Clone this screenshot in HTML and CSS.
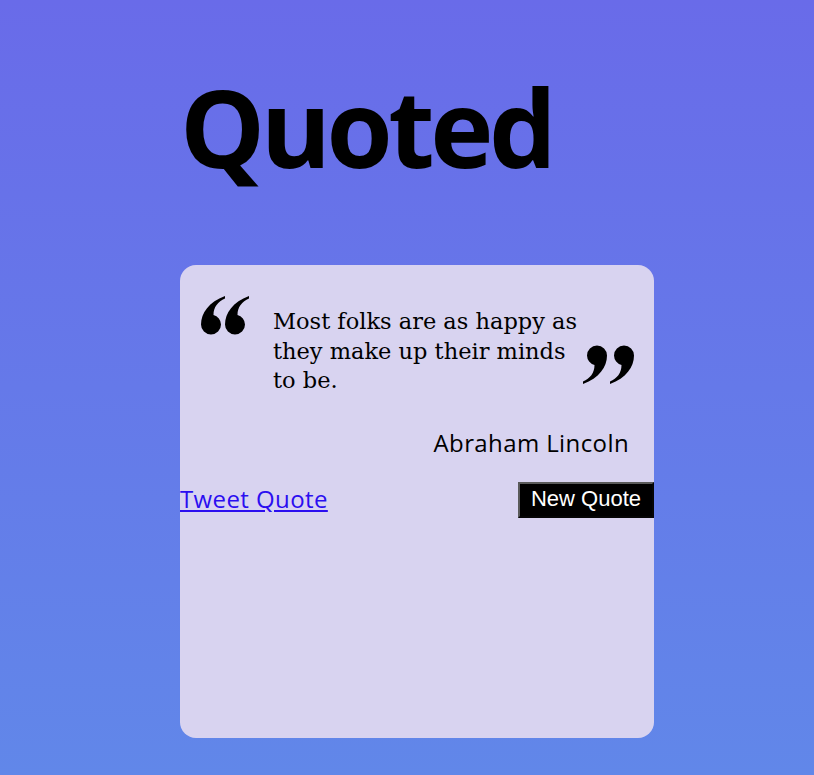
FILE: index.html
```html
<!DOCTYPE html>
<html lang="en">
<head>
<meta charset="utf-8">
<title>Quoted</title>
<link rel="stylesheet" href="styles.css">
</head>
<body>
<main class="page">
  <h1 class="title">Quoted</h1>
  <section class="card">
    <div class="quote-row">
      <svg class="mark mark-open" width="48" height="42" viewBox="0 0 48 42" aria-hidden="true">
        <path d="M24 3 C8 9 0 20 0 31.5 A10 10 0 0 0 20 31.5 A10 10 0 0 0 12.5 22 C12.5 14 17 8.5 24 5.5 Z"/>
        <path transform="translate(24 0)" d="M24 3 C8 9 0 20 0 31.5 A10 10 0 0 0 20 31.5 A10 10 0 0 0 12.5 22 C12.5 14 17 8.5 24 5.5 Z"/>
      </svg>
      <p class="quote-text">Most folks are as happy as they make up their minds to be.</p>
      <svg class="mark mark-close" width="54" height="42" viewBox="0 0 54 42" aria-hidden="true">
        <g transform="rotate(180 27 21)">
          <path transform="translate(2 0)" d="M24 3 C8 9 0 20 0 31.5 A10 10 0 0 0 20 31.5 A10 10 0 0 0 12.5 22 C12.5 14 17 8.5 24 5.5 Z"/>
          <path transform="translate(29 0)" d="M24 3 C8 9 0 20 0 31.5 A10 10 0 0 0 20 31.5 A10 10 0 0 0 12.5 22 C12.5 14 17 8.5 24 5.5 Z"/>
        </g>
      </svg>
    </div>
    <p class="author">Abraham Lincoln</p>
    <div class="actions">
      <a class="tweet" href="#">Tweet Quote</a>
      <button class="new-quote" type="button">New Quote</button>
    </div>
  </section>
</main>
</body>
</html>
```

FILE: styles.css
```css
html, body {
  margin: 0;
  padding: 0;
}

body {
  min-height: 775px;
  background: linear-gradient(180deg, #696be9 0%, #6187e9 100%);
  font-family: "Open Sans", "Noto Sans", sans-serif;
}

.page {
  padding: 73px 0 0 180px;
}

.title {
  margin: 0;
  font-size: 107px;
  line-height: 107px;
  font-weight: 700;
  color: #000;
  letter-spacing: -4.5px;
}

.card {
  margin-top: 85px;
  width: 474px;
  height: 473px;
  background: #d8d3f0;
  border-radius: 16px;
  box-sizing: border-box;
}

.quote-row {
  display: flex;
  align-items: flex-start;
  padding: 28px 0 0 21px;
}

.mark {
  flex: none;
  display: block;
  fill: #000;
}

.mark-open {
  margin-right: 24px;
}

.mark-close {
  margin-top: 52px;
  margin-left: 1px;
}

.quote-text {
  margin: 14px 0 0 0;
  width: 308px;
  flex: none;
  font-family: "DejaVu Serif", "Liberation Serif", serif;
  font-size: 22.5px;
  line-height: 29.5px;
  color: #000;
}

.author {
  margin: 30px 25px 0 0;
  text-align: right;
  font-size: 24px;
  line-height: 33px;
  letter-spacing: 0.4px;
  color: #000;
}

.actions {
  display: flex;
  justify-content: space-between;
  align-items: flex-start;
  margin-top: 23px;
}

.tweet {
  font-size: 24px;
  line-height: 33px;
  letter-spacing: 0.4px;
  color: #2b0ef0;
  text-decoration: underline;
}

.new-quote {
  font-family: "Liberation Sans", Arial, sans-serif;
  font-size: 22px;
  line-height: 26px;
  color: #fff;
  background: #000;
  border: 2px outset #5a5a5a;
  padding: 2px 11px 4px;
  height: 36px;
  box-sizing: border-box;
}
```
